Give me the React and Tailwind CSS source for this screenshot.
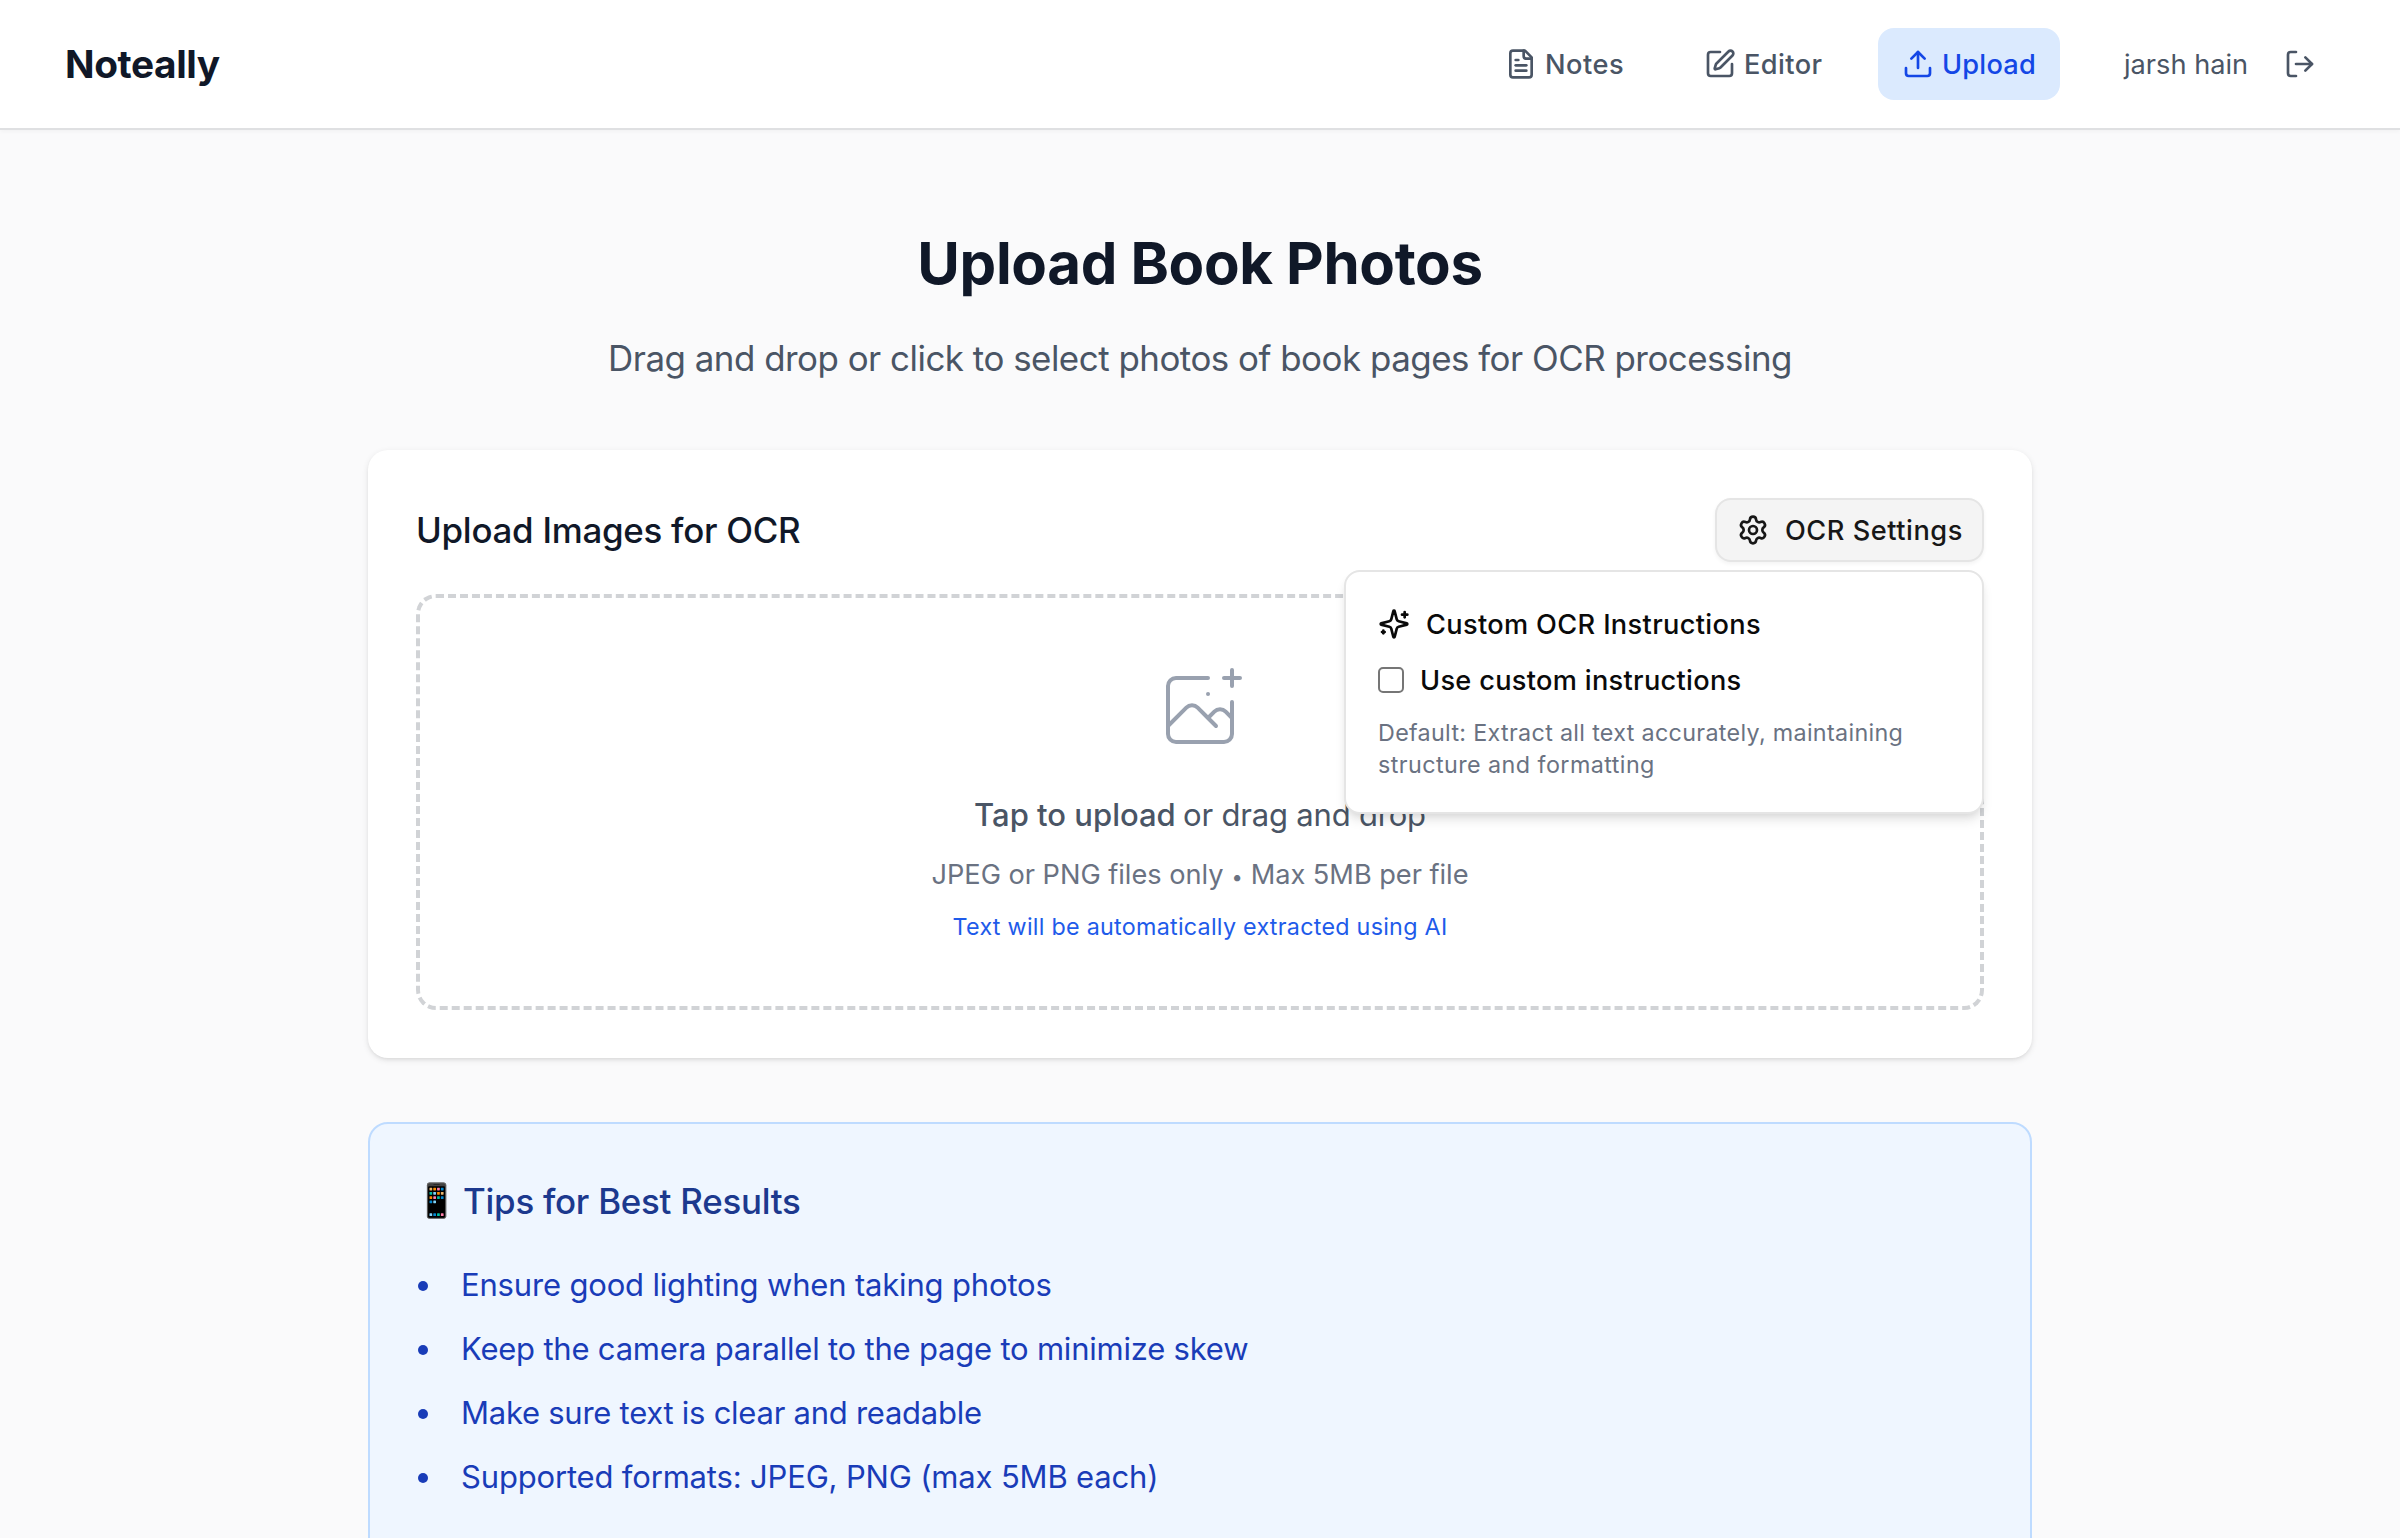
import { LogOut, Settings, SquarePen, Upload } from "lucide-react";

function FileIcon({ className }) {
  return (
    <svg
      className={className}
      viewBox="0 0 24 24"
      fill="none"
      stroke="currentColor"
      strokeWidth="2"
      strokeLinecap="round"
      strokeLinejoin="round"
    >
      <path d="M15 2H6a2 2 0 0 0-2 2v16a2 2 0 0 0 2 2h12a2 2 0 0 0 2-2V7Z" />
      <path d="M14 2v4a2 2 0 0 0 2 2h4" />
      <path d="M10 9H8" />
      <path d="M16 13H8" />
      <path d="M16 17H8" />
    </svg>
  );
}

function SparklesIcon({ className }) {
  return (
    <svg
      className={className}
      viewBox="0 0 24 24"
      fill="none"
      stroke="currentColor"
      strokeWidth="2"
      strokeLinecap="round"
      strokeLinejoin="round"
    >
      <path d="M9.937 15.5A2 2 0 0 0 8.5 14.063l-6.135-1.582a.5.5 0 0 1 0-.962L8.5 9.936A2 2 0 0 0 9.937 8.5l1.582-6.135a.5.5 0 0 1 .963 0L14.063 8.5A2 2 0 0 0 15.5 9.937l6.135 1.581a.5.5 0 0 1 0 .964L15.5 14.063a2 2 0 0 0-1.437 1.437l-1.582 6.135a.5.5 0 0 1-.963 0z" />
      <path d="M20 3v4" />
      <path d="M22 5h-4" />
      <path d="M4 17v2" />
      <path d="M5 18H3" />
    </svg>
  );
}

function PhotoPlusIcon({ className }) {
  return (
    <svg
      className={className}
      viewBox="0 0 48 48"
      fill="none"
      stroke="currentColor"
      strokeWidth="2"
      strokeLinecap="round"
      strokeLinejoin="round"
    >
      <path d="M28 8H12a4 4 0 0 0-4 4v20m32-12v8m0 0v8a4 4 0 0 1-4 4H12a4 4 0 0 1-4-4v-4m32-4l-3.172-3.172a4 4 0 0 0-5.656 0L28 28M8 32l9.172-9.172a4 4 0 0 1 5.656 0L28 28m0 0l4 4m4-24h8m-4-4v8m-12 4h.02" />
    </svg>
  );
}

function Header() {
  return (
    <header className="flex h-[130px] items-center justify-between border-b-2 border-[#dfe0e2] bg-white pl-[65px] pr-16 shadow-[0_2px_4px_0_rgb(0_0_0/0.03)]">
      <div className="text-[38.8px] leading-[56px] font-bold tracking-[-0.4px] text-[#101828]">
        Noteally
      </div>
      <nav className="flex items-center text-[27.2px] leading-10 text-gray-600">
        <a className="flex h-[72px] w-[167px] items-center gap-2 rounded-2xl pl-6 font-medium tracking-[0.5px]">
          <FileIcon className="size-8 shrink-0" />
          <span className="pt-0.5">Notes</span>
        </a>
        <a className="ml-8 flex h-[72px] w-[166px] items-center gap-2 rounded-2xl pl-6 font-medium tracking-[0.4px]">
          <SquarePen className="size-8 shrink-0" />
          <span className="pt-0.5">Editor</span>
        </a>
        <a className="ml-8 flex h-[72px] w-[182px] items-center gap-2 rounded-2xl bg-blue-100 pl-6 font-medium tracking-[0.2px] text-blue-700">
          <Upload className="size-8 shrink-0" />
          <span className="pt-0.5">Upload</span>
        </a>
        <span className="ml-[64px] w-[140px] pt-0.5 whitespace-nowrap">jarsh hain</span>
        <button className="flex h-16 w-[72px] items-center justify-center rounded-2xl">
          <LogOut className="size-8" />
        </button>
      </nav>
    </header>
  );
}

function SettingsPopover() {
  return (
    <div className="absolute top-[72px] right-0 z-10 w-[640px] rounded-2xl border-2 border-[#e5e5e5] bg-white p-8 text-[#0a0a0a] shadow-[0_8px_12px_-2px_rgb(0_0_0/0.1),0_4px_8px_-4px_rgb(0_0_0/0.1)]">
      <div className="flex h-10 items-center gap-4 text-[27.2px] leading-10 font-medium tracking-[0.34px]">
        <SparklesIcon className="size-8" />
        <span className="pt-0.5">Custom OCR Instructions</span>
      </div>
      <label className="mt-4 flex h-10 items-center gap-4 text-[27.2px] leading-10 font-medium tracking-[0.3px]">
        <span className="size-[26px] rounded-[5px] border-2 border-[#767676] bg-white" />
        <span className="pt-0.5">Use custom instructions</span>
      </label>
      <p className="mt-[17px] -mb-px text-[23.3px] leading-8 text-gray-500">
        <span className="block tracking-[0.32px]">
          Default: Extract all text accurately, maintaining
        </span>
        <span className="block tracking-[0.44px]">structure and formatting</span>
      </p>
    </div>
  );
}

function UploadCard() {
  return (
    <section className="mt-16 rounded-[20px] bg-white p-12 shadow-[0_2px_6px_0_rgb(0_0_0/0.1),0_2px_4px_-2px_rgb(0_0_0/0.1)]">
      <div className="relative flex h-16 items-center justify-between">
        <h2 className="text-[34.9px] leading-[56px] font-medium tracking-[-0.265px] text-[#101828]">
          Upload Images for OCR
        </h2>
        <button className="flex h-16 w-[269px] items-center gap-4 rounded-2xl border-2 border-[#e5e5e5] bg-[#f4f4f4] pl-5 text-[27.2px] leading-10 font-medium tracking-[0.52px] whitespace-nowrap text-[#171717] shadow-[0_2px_4px_0_rgb(0_0_0/0.05)]">
          <Settings className="size-8 shrink-0" />
          <span className="pt-0.5">OCR Settings</span>
        </button>
        <SettingsPopover />
      </div>
      <div className="mt-8 flex flex-col items-center rounded-[20px] border-4 border-dashed border-[#d1d3d6] pt-16 pb-[63px]">
        <PhotoPlusIcon className="size-24 text-gray-400" />
        <p className="mt-[33px] flex gap-[7.3px] text-[31px] leading-[48px] text-gray-600">
          <span className="font-medium">Tap to upload</span>
          <span className="tracking-[-0.19px]">or drag and drop</span>
        </p>
        <p className="mt-4 text-[27.2px] leading-10 tracking-[-0.03px] text-gray-500">
          JPEG or PNG files only{" "}
          <span className="inline-block w-[12px] pb-0.5 text-center text-[20px] leading-none">
            •
          </span>{" "}
          Max 5MB per file
        </p>
        <p className="mt-4 text-[23.3px] leading-8 tracking-[0.27px] text-[#1e5bea]">
          Text will be automatically extracted using AI
        </p>
      </div>
    </section>
  );
}

const tips = [
  { text: "Ensure good lighting when taking photos", tracking: "tracking-[-0.17px]" },
  { text: "Keep the camera parallel to the page to minimize skew", tracking: "tracking-[-0.21px]" },
  { text: "Make sure text is clear and readable", tracking: "tracking-[-0.26px]" },
  { text: "Supported formats: JPEG, PNG (max 5MB each)", tracking: "tracking-[-0.17px]" },
];

function TipsCard() {
  return (
    <section className="mt-16 rounded-[20px] border-2 border-[#bedbff] bg-blue-50 px-12 pt-12 pb-24">
      <h3 className="flex items-center text-[34.9px] leading-[56px] font-medium tracking-[-0.25px] text-blue-900">
        <span className="-ml-0.5 w-[47px] pb-0.5 text-[33px] whitespace-nowrap">📱</span>
        Tips for Best Results
      </h3>
      <ul className="mt-[30px] flex flex-col gap-4 text-[31px] leading-[48px] text-blue-800">
        {tips.map((tip) => (
          <li key={tip.text} className="flex h-12 items-center">
            <span className="mt-[3px] mr-[33px] size-[10px] rounded-full bg-blue-800" />
            <span className={`pt-0.5 ${tip.tracking}`}>{tip.text}</span>
          </li>
        ))}
      </ul>
    </section>
  );
}

export default function App() {
  return (
    <div className="h-[1538px] overflow-hidden bg-[#fafafb] font-['Inter','Liberation_Sans',sans-serif]">
      <Header />
      <main className="mx-auto w-[1664px] pt-[97px]">
        <h1 className="text-center text-[58.2px] leading-[72px] font-bold tracking-[-0.35px] text-[#101828]">
          Upload Book Photos
        </h1>
        <p className="mt-[31px] text-center text-[34.9px] leading-[56px] tracking-[-0.495px] text-gray-600">
          Drag and drop or click to select photos of book pages for OCR processing
        </p>
        <UploadCard />
        <TipsCard />
      </main>
    </div>
  );
}
